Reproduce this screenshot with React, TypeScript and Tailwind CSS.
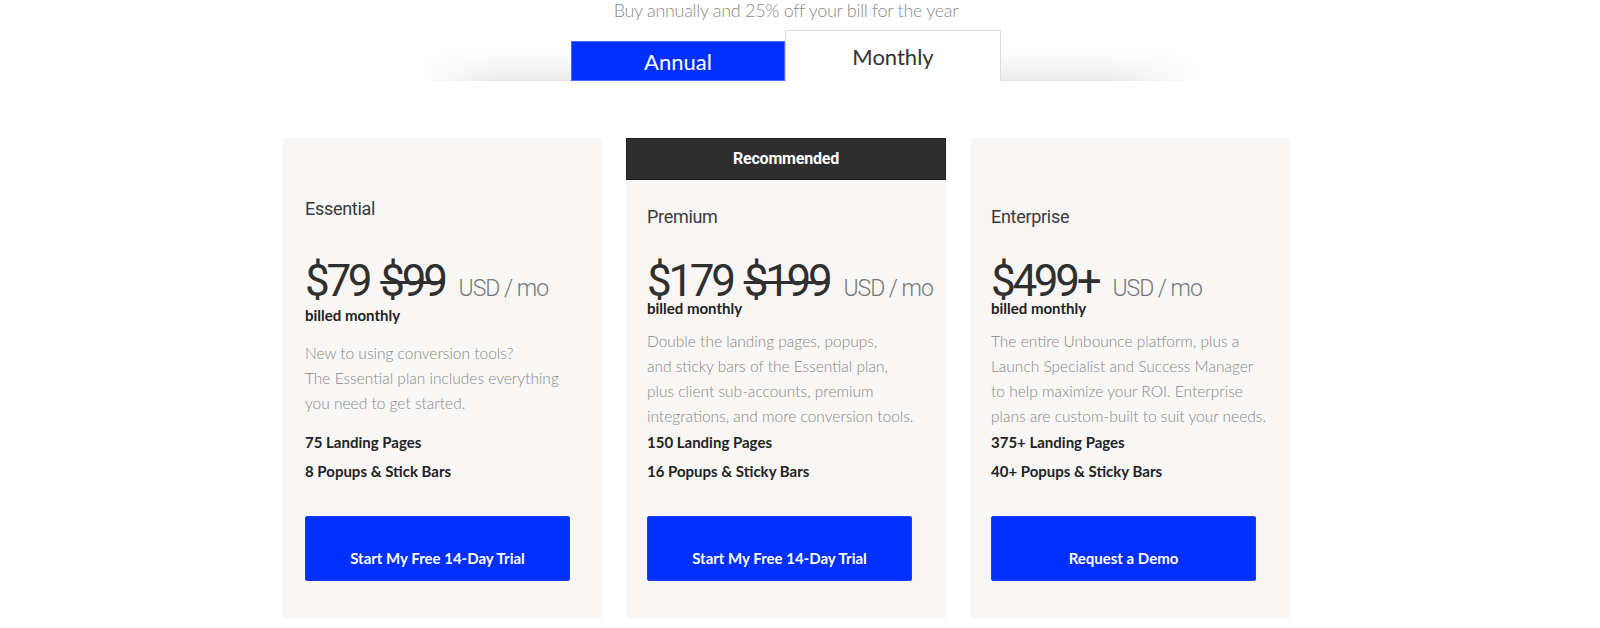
import React from "react";

type Plan = {
  name: string;
  price: string;
  old?: string;
  desc: string[];
  features: string[];
  cta: string;
  recommended?: boolean;
  first?: boolean;
};

const plans: Plan[] = [
  {
    name: "Essential",
    price: "$79",
    old: "$99",
    desc: [
      "New to using conversion tools?",
      "The Essential plan includes everything",
      "you need to get started.",
    ],
    features: ["75 Landing Pages", "8 Popups & Stick Bars"],
    cta: "Start My Free 14-Day Trial",
    first: true,
  },
  {
    name: "Premium",
    price: "$179",
    old: "$199",
    desc: [
      "Double the landing pages, popups,",
      "and sticky bars of the Essential plan,",
      "plus client sub-accounts, premium",
      "integrations, and more conversion tools.",
    ],
    features: ["150 Landing Pages", "16 Popups & Sticky Bars"],
    cta: "Start My Free 14-Day Trial",
    recommended: true,
  },
  {
    name: "Enterprise",
    price: "$499+",
    desc: [
      "The entire Unbounce platform, plus a",
      "Launch Specialist and Success Manager",
      "to help maximize your ROI. Enterprise",
      "plans are custom-built to suit your needs.",
    ],
    features: ["375+ Landing Pages", "40+ Popups & Sticky Bars"],
    cta: "Request a Demo",
  },
];

function Card({ plan }: { plan: Plan }) {
  return (
    <div className="flex h-[480px] flex-col bg-[#f8f7f5]">
      {plan.recommended ? (
        <div className="flex h-[42px] items-center justify-center border border-[#1c1c1c] bg-[#2e2e2e] font-['Roboto',sans-serif] text-[16px] font-bold tracking-[-0.2px] text-white">
          Recommended
        </div>
      ) : (
        <div className={plan.first ? "h-[34px]" : "h-[42px]"} />
      )}
      <div className={plan.first ? "pl-[23px]" : "pl-[21px]"}>
        <div className="mt-[25px] font-['Roboto',sans-serif] text-[18px] leading-[24px] font-normal tracking-[-0.3px] text-[#3a3a3a]">
          {plan.name}
        </div>
        <div
          className={
            plan.first
              ? "mt-[42px] flex h-[36px] items-baseline whitespace-nowrap font-['Roboto',sans-serif] text-[#2f2f2f]"
              : "mt-[34px] flex h-[36px] items-baseline whitespace-nowrap font-['Roboto',sans-serif] text-[#2f2f2f]"
          }
        >
          <span className="text-[44px] leading-[36px] tracking-[-3.3px]">{plan.price}</span>
          {plan.old && (
            <span className="ml-[11px] text-[44px] leading-[36px] tracking-[-3.3px] line-through decoration-[3px]">
              {plan.old}
            </span>
          )}
          <span className="ml-[14px] text-[23px] leading-[36px] font-light tracking-[-1px] text-[#777]">
            USD / mo
          </span>
        </div>
        <div
          className={
            plan.first
              ? "mt-[9px] text-[15px] leading-[14px] font-bold text-[#222]"
              : "mt-[2px] text-[15px] leading-[14px] font-bold text-[#222]"
          }
        >
          billed monthly
        </div>
        <div
          className={
            plan.first
              ? "mt-[19px] h-[87px] text-[15.5px] leading-[25px] font-light text-[#888]"
              : "mt-[14px] h-[99px] text-[15.5px] leading-[25px] font-light text-[#888]"
          }
        >
          {plan.desc.map((d) => (
            <div key={d} className="whitespace-nowrap">
              {d}
            </div>
          ))}
        </div>
        <div className="text-[15px] leading-[29px] font-bold text-[#222]">
          {plan.features.map((f) => (
            <div key={f}>{f}</div>
          ))}
        </div>
        <button className="mt-[30px] flex h-[65px] w-[265px] items-end justify-center rounded-[2px] border border-[#1a3cff] bg-[#0030ff] pb-[12px] text-[15px] leading-[20px] font-bold text-white">
          {plan.cta}
        </button>
      </div>
    </div>
  );
}

export default function App() {
  return (
    <div className="min-h-[628px] bg-white font-['Lato',sans-serif]">
      <div className="ml-[282px] w-[1008px]">
        <p className="text-center text-[18px] leading-[20px] font-light tracking-[-0.3px] text-[#8a8a8a]">
          Buy annually and 25% off your bill for the year
        </p>
        <div className="relative mt-[10px] flex h-[51px] justify-center">
          <div className="absolute bottom-0 left-[138px] h-[32px] w-[780px] border-b border-[#e4e4e4] bg-[linear-gradient(to_bottom,#ffffff,#ececec)] [mask-image:linear-gradient(to_right,transparent,black_10%,black_88%,transparent)]" />
          <button className="relative mt-[11px] h-[40px] w-[214px] border border-[#4a66ff] bg-[#0030ff] text-[22px] text-white">
            Annual
          </button>
          <button className="relative h-[51px] w-[216px] border border-b-0 border-[#dcdcdc] bg-white text-[22px] text-[#333]">
            Monthly
          </button>
        </div>
        <div className="mt-[57px] grid grid-cols-3 gap-[24px]">
          {plans.map((p) => (
            <Card key={p.name} plan={p} />
          ))}
        </div>
      </div>
    </div>
  );
}
